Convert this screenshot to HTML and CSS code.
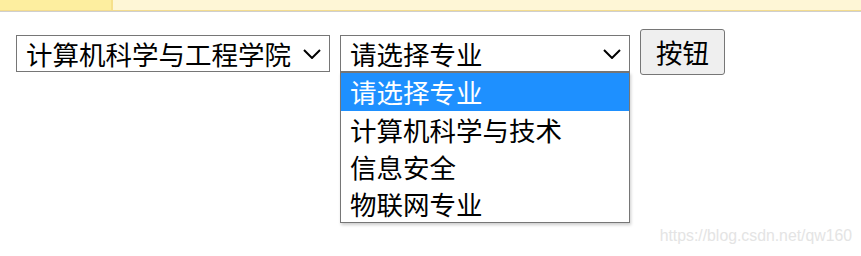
FILE: index.html
```html
<!DOCTYPE html>
<html lang="zh-CN">
<head>
<meta charset="utf-8">
<title>select</title>
<link rel="stylesheet" href="styles.css">
</head>
<body>
<div class="topbar">
  <div class="tab-active"></div>
  <div class="tab-rest"></div>
</div>
<div class="row">
  <div class="select-wrap sel-college">
    <select class="select">
      <option>计算机科学与工程学院</option>
    </select>
    <svg class="chev" width="18" height="10" viewBox="0 0 18 10"><path d="M1 1 L9 9 L17 1" fill="none" stroke="#000" stroke-width="2"/></svg>
  </div>
  <div class="select-wrap sel-major">
    <select class="select">
      <option>请选择专业</option>
    </select>
    <svg class="chev" width="18" height="10" viewBox="0 0 18 10"><path d="M1 1 L9 9 L17 1" fill="none" stroke="#000" stroke-width="2"/></svg>
    <ul class="dropdown">
      <li class="opt opt-active">请选择专业</li>
      <li class="opt">计算机科学与技术</li>
      <li class="opt">信息安全</li>
      <li class="opt">物联网专业</li>
    </ul>
  </div>
  <button class="btn">按钮</button>
</div>
<div class="watermark">https://blog.csdn.net/qw160</div>
</body>
</html>
```

FILE: styles.css
```css
html, body {
  margin: 0;
  padding: 0;
  background: #fff;
  width: 861px;
  height: 256px;
  overflow: hidden;
  font-family: "Noto Sans CJK SC", "Noto Sans", sans-serif;
}
body { position: relative; }

.topbar {
  display: flex;
  height: 10px;
  border-bottom: 1px solid #f3dc8f;
  box-shadow: 0 1px 0 #cfcfcf;
}
.tab-active {
  width: 111px;
  background: #fdee9f;
  border-right: 2px solid #f6e08c;
}
.tab-rest {
  flex: 1;
  background: #fef6d6;
}

.row {
  display: flex;
  align-items: flex-start;
  gap: 10px;
  padding-left: 16px;
  margin-top: 18px;
}

.select-wrap {
  position: relative;
  margin-top: 6px;
}
.sel-college { width: 314px; }
.sel-major { width: 290px; }

.select {
  -webkit-appearance: none;
  appearance: none;
  display: block;
  width: 100%;
  height: 37px;
  margin: 0;
  padding: 0 0 0 9px;
  border: 1px solid #767676;
  border-radius: 0;
  background: #fff;
  color: #000;
  font-family: "Noto Sans CJK SC", sans-serif;
  font-size: 26.5px;
  line-height: 35px;
  outline: none;
}

.chev {
  position: absolute;
  right: 9px;
  top: 14px;
  pointer-events: none;
}

.dropdown {
  position: absolute;
  left: 0;
  top: 37px;
  width: 290px;
  box-sizing: border-box;
  margin: 0;
  padding: 0;
  list-style: none;
  background: #fff;
  border: 1px solid #767676;
  box-shadow: 1px 2px 3px rgba(0,0,0,0.2);
}
.opt {
  height: 37px;
  line-height: 37px;
  padding-left: 9px;
  font-size: 26.5px;
  color: #000;
  white-space: nowrap;
}
.opt-active {
  height: 38px;
  line-height: 38px;
  background: #1e90ff;
  color: #fff;
}

.btn {
  width: 85px;
  height: 46px;
  margin: 0;
  padding: 0;
  background: #efefef;
  border: 1px solid #767676;
  border-radius: 3px;
  color: #000;
  font-family: "Noto Sans CJK SC", sans-serif;
  font-size: 26.5px;
  line-height: 44px;
}

.watermark {
  position: absolute;
  right: 9px;
  top: 227px;
  font-family: "Liberation Sans", Arial, sans-serif;
  font-size: 15.8px;
  color: #e4e4e4;
}
```
